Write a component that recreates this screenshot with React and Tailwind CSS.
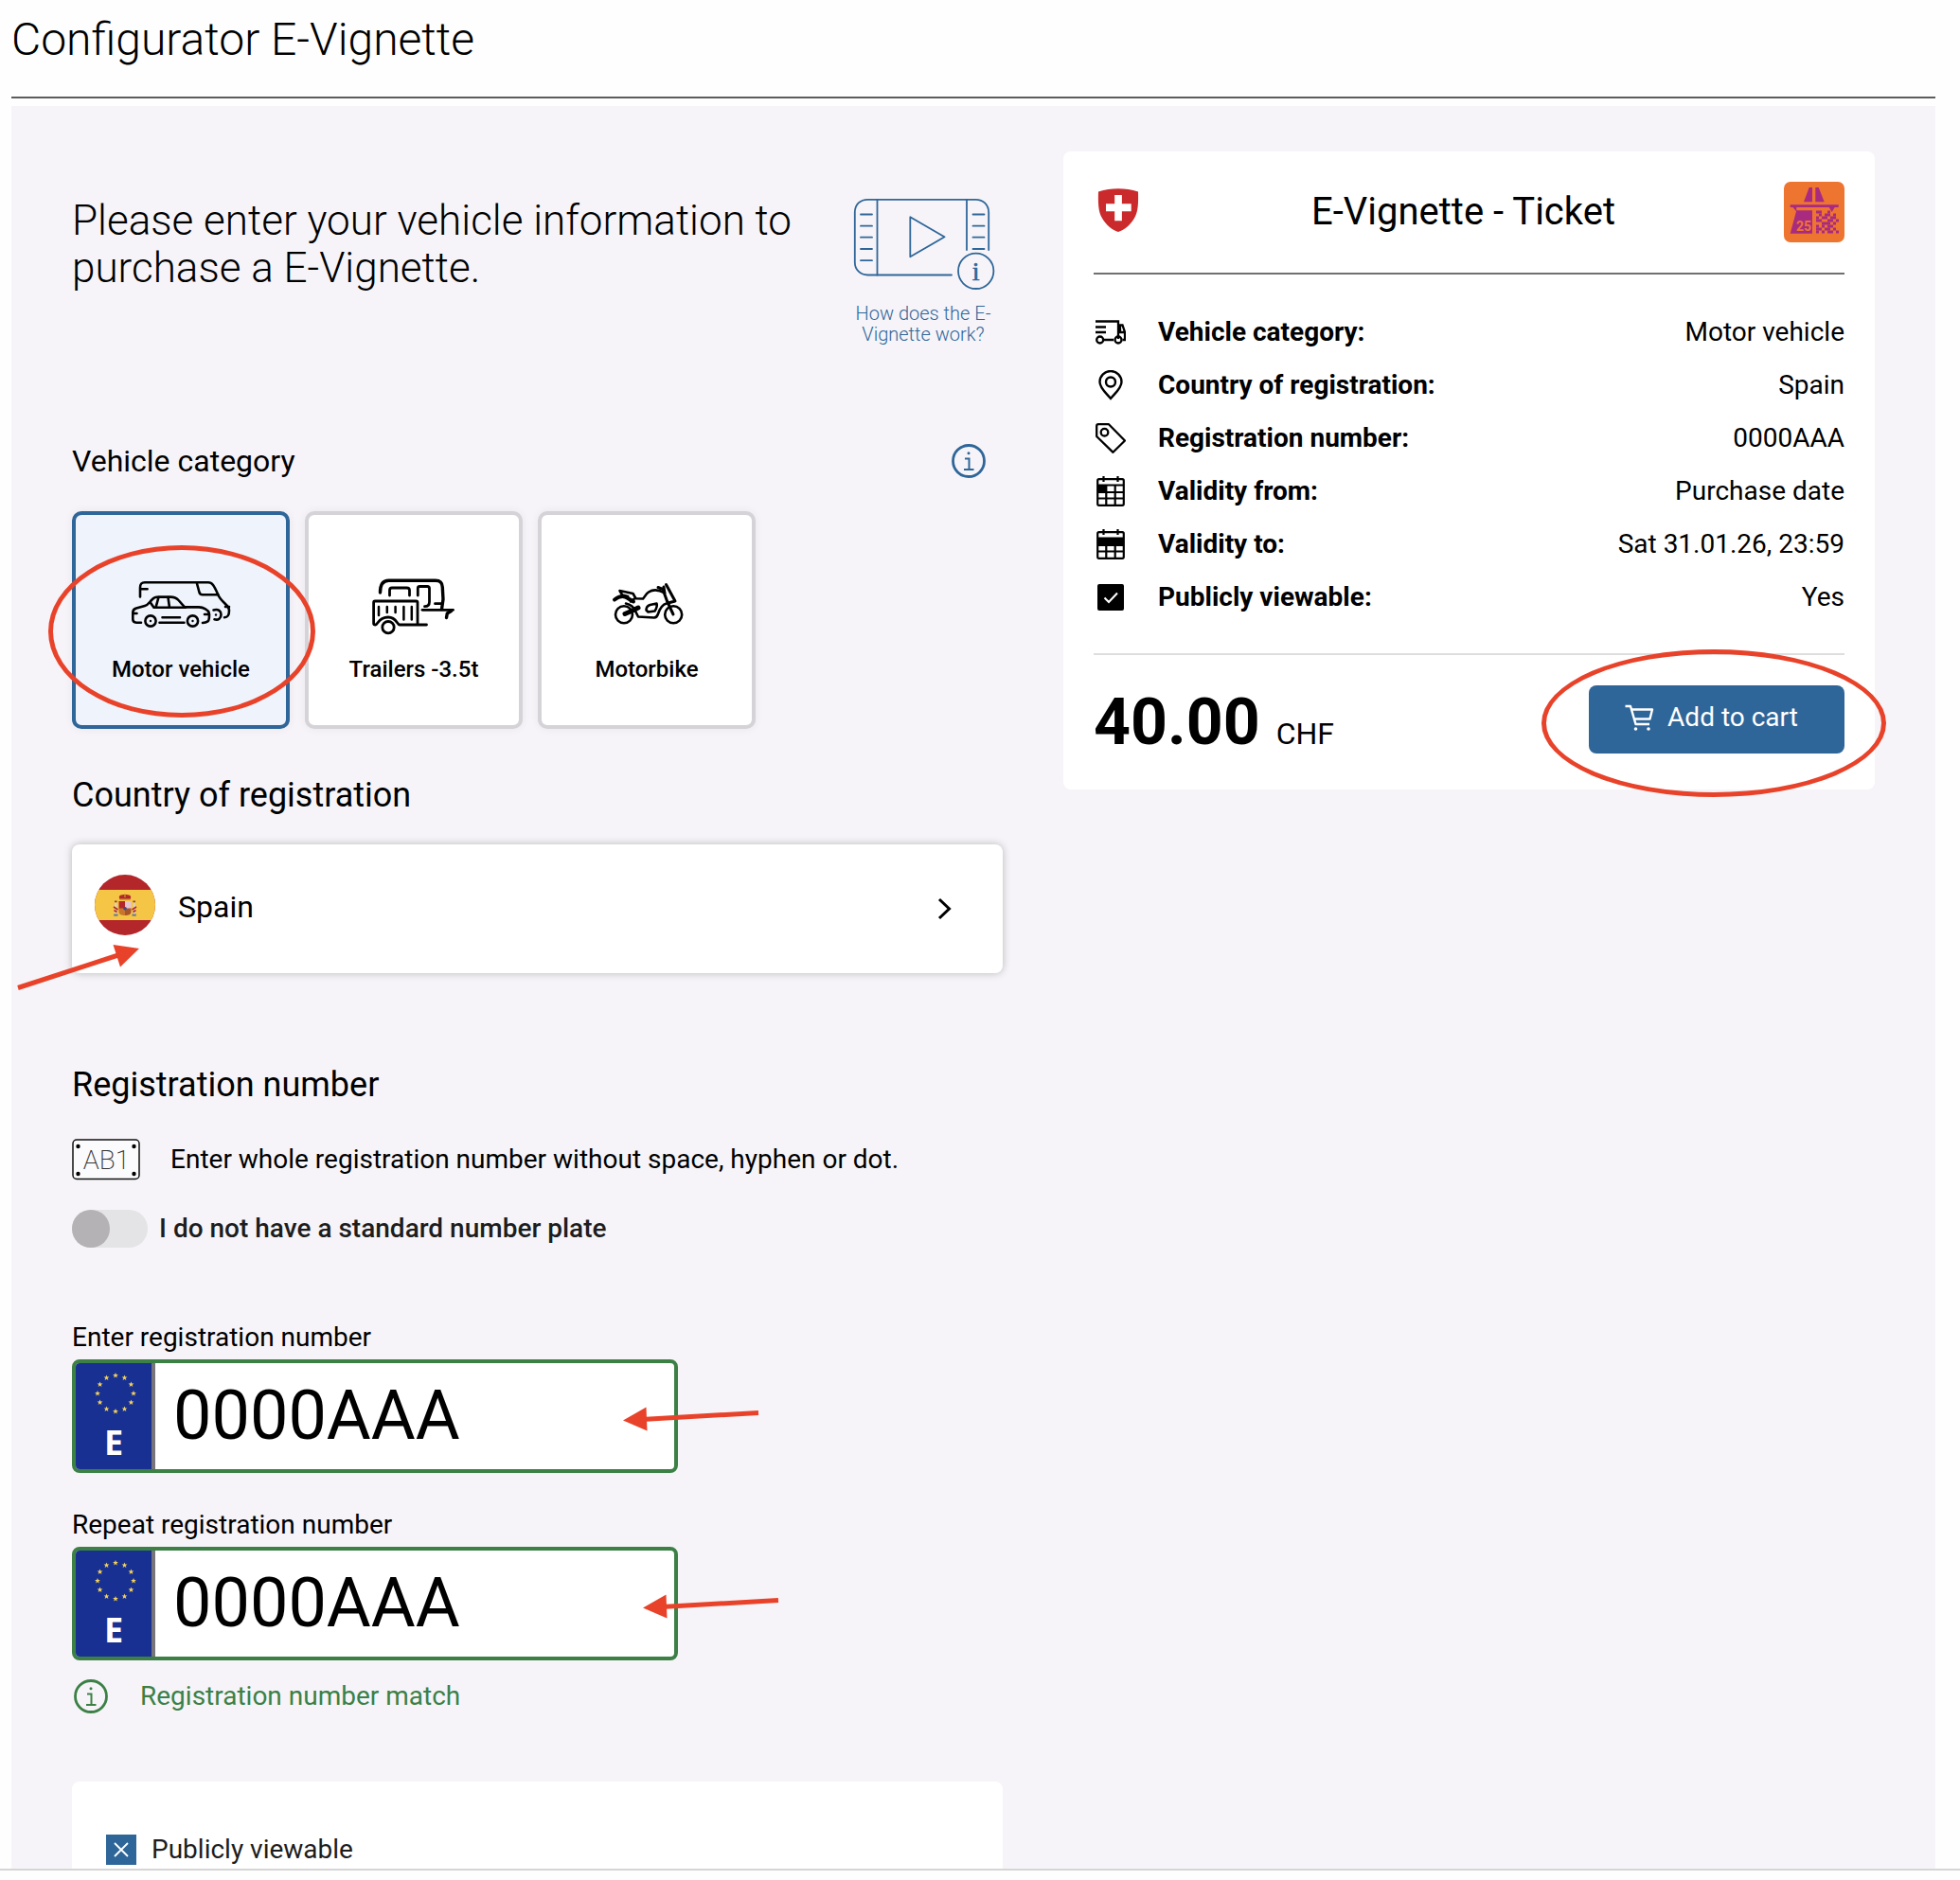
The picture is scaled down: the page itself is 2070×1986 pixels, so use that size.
import React, { useState } from 'react';

const CATEGORIES = [
  { key: 'motor', label: 'Motor vehicle', Icon: CarIcon },
  { key: 'trailer', label: 'Trailers -3.5t', Icon: TrailerIcon },
  { key: 'motorbike', label: 'Motorbike', Icon: MotorbikeIcon },
];

const EU_STARS = Array.from({ length: 12 }, (_, i) => {
  const a = (i * Math.PI) / 6;
  return [22 + 19 * Math.sin(a), 22 - 19 * Math.cos(a)];
});

const DATA_PATTERN = ['11001000', '01011010', '10110110', '11001101', '00111010', '10101100', '11011010', '10101101'];

function CarIcon() {
  return (
    <svg width="108" height="64" viewBox="1 -2 108 64" fill="none" stroke="#000" strokeWidth="2.6" strokeLinecap="round" strokeLinejoin="round">
      <path d="M12 20.5V11c0-4 1-5.7 5-5.7h67c4 0 6 3 10.3 13 1 3 4 6 7.7 9.7 3 3 4 4 4 7 0 6-2 7-5 7.2" />
      <path d="M13 12.3h6.6M72 6.5l2.3 8.5c.5 2.4 1.2 3.3 3.5 3.3h16.5M102 31h4" />
      <path d="M13 47.7H8c-2.6 0-3.7-1-3.7-3.4V37c0-2.5 1-3.6 3.7-4.4l9-2.6c3.5-1 5-4 7-6 3-3 4-3.4 8-3.4h12c4 0 6 .4 8.5 3.4l6.5 7.4H74c5 0 10 3 10.7 6 .6 3 .3 8-1.2 9-1.5 1-3 1.5-5.5 1.6" />
      <path d="M23 26.7l3.5 5H60M31.5 21l-3 10.700M41.5 21l1.5 10.700M4.5 38h4M80 39h5M35.5 42.3H54M32.5 47.7h26" />
      <circle cx="23" cy="46" r="5.6" />
      <circle cx="67.5" cy="46" r="5.6" />
      <path d="M89.5 34.5c5-1.5 8 1 8 4.8s-3 6.3-7 5" />
      <g fill="#000" stroke="none">
        <circle cx="23" cy="46" r="1.2" />
        <circle cx="67.5" cy="46" r="1.2" />
        <circle cx="92" cy="39.5" r="1.2" />
      </g>
    </svg>
  );
}

function TrailerIcon() {
  return (
    <svg width="96" height="64" viewBox="0 -2 96 64" fill="none" stroke="#000" strokeWidth="2.8" strokeLinecap="round" strokeLinejoin="round">
      <path strokeWidth="3.4" d="M12.5 16c0-8 3-12.7 9-12.7H71c5 0 7 2 7.3 7L79 23l-1.5 10.5" />
      <path d="M57 34.3h32.5" />
      <path strokeWidth="3.4" d="M87.5 35.5l-4.2 2.5-.8 4.5" />
      <path d="M22.5 19v-5.5c0-1.8.7-2.5 2.5-2.5h15.5c1.8 0 3 .7 3 2.5V19M52.3 19v-7.5c0-1.5.7-2 2-2h8c1.5 0 2.2.7 2.2 2.2v14c0 3-1 5-5 5M70.5 27.7H78" />
      <path d="M52 50V26.5c0-1-.5-1.5-1.5-1.5H7.100c-1 0-1.5.5-1.5 1.5v22c0 1 .5 1.5 2 1.5 2.4 0 3-8 13.4-8 9 0 9 8 12 8h28.5" />
      <path strokeWidth="2.5" d="M11 31v9M19.8 31v6M28.6 31v6M37.4 31v13.5M45.8 31v13.5" />
      <circle cx="21" cy="52.7" r="6.2" />
    </svg>
  );
}

function MotorbikeIcon() {
  return (
    <svg width="84" height="64" viewBox="0 -2 84 64" fill="none" stroke="#000" strokeWidth="2.6" strokeLinecap="round" strokeLinejoin="round">
      <circle cx="18" cy="39.3" r="9" />
      <circle cx="70.2" cy="39.3" r="9" />
      <path strokeWidth="5" d="M19 38.5l8-3.5 6-3" />
      <path strokeWidth="4" d="M8 23.5c5-4 10-4.5 14-1.5l6 3.5" />
      <path d="M20 27.5c5 1 8 3 10 8l3 6 17 1c2 0 3-1 4-4 2-6 5-10 9-11" />
      <path d="M13.5 14l2.7 4.5 6 1.5M13.5 14l14 3 3 5.2 7.5.3c2-2 3-5 6-7 5-3.3 11-2.5 17 1M29 22.5l-4 3" />
      <path strokeWidth="3" d="M62.5 7.5l9.5 17.5-7.5 2" />
      <path strokeWidth="3" d="M54 10.5l5 2 4.5 12.5 6.5 14M60 10l1 7" />
      <path d="M41.5 34.5c0-3 1-4.5 4-5.5l7-1.5c1 3 0 5-2 8l-7 1z" />
    </svg>
  );
}

function InfoIcon() {
  return (
    <svg className="shrink-0" width="36" height="36" viewBox="0 0 36 36" fill="none" stroke="currentColor" strokeWidth="2.8">
      <circle cx="18" cy="18" r="16.5" />
      <path strokeWidth="2" d="M14 15.5h4.500V27M13 27h10.500" />
      <circle cx="18" cy="9.7" r="1.500" fill="currentColor" stroke="none" />
    </svg>
  );
}

function VideoIcon() {
  return (
    <svg width="152" height="100" viewBox="0 0 152 100" fill="none" stroke="currentColor" strokeWidth="1.8" strokeLinecap="round" strokeLinejoin="round">
      <path d="M106 82.5H17.5c-8 0-13.7-5.6-13.7-13.5V16.5C3.8 8 9.5 2.8 17.5 2.8h114c8 0 13.7 5.6 13.7 13.700V56" />
      <path d="M27.5 2.8v79.700M122 2.8V56" />
      <path d="M10 18.5h12M10 30.7h12M10 42.7h12M10 55h12M10 67.2h12M128.5 18.5h12M128.5 30.7h12M128.5 42.7h12M128.5 55h12" />
      <path d="M62.3 21.3v42l36.2-21z" />
      <circle cx="131.7" cy="78.3" r="18.7" />
      <text x="131.7" y="87.5" textAnchor="middle" fontFamily="Liberation Serif, serif" fontSize="28" fill="currentColor" strokeWidth="0.6">i</text>
    </svg>
  );
}

function SwissShield() {
  return (
    <svg width="52" height="64" viewBox="0 0 52 64">
      <path fill="#cb2a2c" d="M5 10.500C12 7.800 19 7.200 26 7.200s14 .6 21 3.300c.3 11 .3 21-4 28-4 7-10 12-17 14.500C19 50.500 13 45.500 9 38.500c-4.300-7-4.300-17-4-28z" />
      <path fill="#fff" d="M22.200 14h7.700v9.300h9.800v8h-9.800v10h-7.700v-10H13v-8h9.200z" />
    </svg>
  );
}

function VignetteBadge() {
  return (
    <svg width="64" height="64" viewBox="0 0 64 64">
      <rect width="64" height="64" rx="7" fill="#ee7530" />
      <g fill="#a92b80">
        <path d="M21 21.300L26.700 6H30v15.300zM33.300 6h3.400l6 15.300h-9.400zM6.700 24.300h51V27h-4l-3 5-3-5H13.300v4.500L9.500 27H6.700zM13.300 30.300H30v24.400H6.700z" />
        {DATA_PATTERN.map((row, y) =>
          [...row].map((cell, x) => cell === '1' && <rect key={`${x}-${y}`} x={34 + x * 3} y={30.5 + y * 3} width="3" height="3" />)
        )}
      </g>
      <text x="21" y="51.5" textAnchor="middle" fontFamily="Roboto, sans-serif" fontWeight="700" fontSize="14" fill="#ee7530">25</text>
    </svg>
  );
}

function SpainFlag() {
  return (
    <svg className="shrink-0 rounded-full" width="64" height="64" viewBox="0 0 64 64">
      <rect width="64" height="64" fill="#b3272b" />
      <rect y="16" width="64" height="32" fill="#f5c545" />
      <path fill="#b3272b" d="M26 24.5c-1-2.5 2-3.5 6-3.5s7 1 6 3.5l-1 2.5H27z" />
      <path fill="#c9a030" d="M31.4 20h1.2v4h-1.2zM27 25.5h10v1.5H27z" />
      <path fill="#b3272b" d="M25.5 28H32v8h-6.5z" />
      <path fill="#e5c3cf" d="M32 28h6.5v8H32z" />
      <path fill="#c7762c" d="M25.5 35.5H32V43c-4 0-6.5-1-6.5-4z" />
      <path fill="#a8552b" d="M32 35.5h6.5V39c0 3-2.5 4-6.5 4z" />
      <circle cx="32" cy="35.8" r="1.8" fill="#3b4a8c" />
      <path fill="#d8d3cf" d="M21.3 29.5h2V42h-2zM40.7 29.5h2V42h-2z" />
      <path fill="#6f7f86" d="M20.2 41.5h4.3v2.2h-4.3zM39.5 41.5h4.3v2.2h-4.3z" />
      <path fill="none" stroke="#b3272b" strokeWidth="1.6" d="M20 34l4.5 3M44 34l-4.5 3M20.5 37.5l3 2M43.5 37.5l-3 2" />
      <path fill="#8a4a2c" d="M21 27.5h2.6v1.7H21zM40.4 27.5H43v1.7h-2.6z" />
    </svg>
  );
}

function PlateIcon() {
  return (
    <svg className="shrink-0" width="72" height="44" viewBox="0 0 72 44">
      <rect x="1" y="1" width="70" height="41.5" rx="4" fill="#fbfafc" stroke="#111" strokeWidth="1.5" />
      <g fill="#000">
        <circle cx="6.5" cy="8" r="2.2" />
        <circle cx="65.5" cy="8" r="2.2" />
        <circle cx="6.5" cy="37" r="2.2" />
        <circle cx="65.5" cy="37" r="2.2" />
      </g>
      <text x="36.5" y="32" textAnchor="middle" fontFamily="Roboto, sans-serif" fontWeight="200" fontSize="28" fill="#333">AB1</text>
    </svg>
  );
}

function TruckIcon() {
  return (
    <svg width="32" height="32" viewBox="0 0 32 32" fill="none" stroke="#000" strokeWidth="2.3">
      <path d="M0 4.5h24V23M0 10.5h11M0 16h11M9 24h10M24 8.5h4.5L31 16v8h-2.5M26 9.500V16h5" />
      <circle cx="4.7" cy="24" r="3.5" />
      <circle cx="24" cy="24" r="3.5" />
    </svg>
  );
}

function PinIcon() {
  return (
    <svg width="32" height="32" viewBox="0 0 32 32" fill="none" stroke="#000" strokeWidth="2.4">
      <path d="M16 30C11 24 4.5 19 4.5 12.500a11.500 11.500 0 0 1 23 0C27.5 19 21 24 16 30z" />
      <circle cx="16" cy="12.5" r="5" />
    </svg>
  );
}

function TagIcon() {
  return (
    <svg width="32" height="32" viewBox="0 0 32 32" fill="none" stroke="#000" strokeWidth="2.3" strokeLinejoin="round">
      <path d="M1.2 3c0-1.2.6-1.8 1.8-1.8h11L31 18.500 18.500 30.800 1.200 14z" />
      <circle cx="9.5" cy="9.7" r="3.8" />
    </svg>
  );
}

function CalendarIcon({ fullWeek }) {
  return (
    <svg width="32" height="32" viewBox="0 0 32 32" fill="none" stroke="#000" strokeWidth="2.2">
      <rect x="2.2" y="3.2" width="27.6" height="27.6" rx="1.5" />
      <path d="M8.5 0v6M23.5 0v6M2 9.500h28M2 17h28M2 23.500h28M11.300 9.500V31M20.700 9.500V31" />
      <path fill="#000" stroke="none" d={fullWeek ? 'M2 9h28v8H2z' : 'M2 9h9.500v8H2z'} />
    </svg>
  );
}

function CheckedIcon() {
  return (
    <svg width="32" height="32" viewBox="0 0 32 32">
      <rect x="2" y="2" width="28" height="28" rx="2" fill="#000" />
      <path d="M9.500 16.500l4.500 4.500 9-9.500" fill="none" stroke="#fff" strokeWidth="2" />
    </svg>
  );
}

function CartIcon() {
  return (
    <svg width="32" height="32" viewBox="0 0 32 32" fill="none" stroke="#fff" strokeWidth="2.4" strokeLinejoin="round">
      <path d="M1.500 4H7l5.500 19H27M8.200 7.500H30L27.500 17.500H11" />
      <circle cx="12.5" cy="28" r="1.8" fill="#fff" stroke="none" />
      <circle cx="26" cy="28" r="1.8" fill="#fff" stroke="none" />
    </svg>
  );
}

// hand-drawn marker pointing to the left
function LeftArrow({ className }) {
  return (
    <svg className={className} width="144" height="28" viewBox="0 0 144 28">
      <path d="M20 14.500L143 7.500" stroke="#e8432a" strokeWidth="5" />
      <path d="M0 15.500L24.500 1.500l1 25z" fill="#e8432a" />
    </svg>
  );
}

function PlateInput({ id, label, arrowClass }) {
  const [value, setValue] = useState('0000AAA');
  return (
    <div>
      <label htmlFor={id} className="block text-[28px] leading-[38px]">{label}</label>
      <div className="relative mt-1 flex h-[120px] w-full max-w-[640px] rounded-lg border-4 border-[#3c8046] bg-white">
        <div className="flex w-21 shrink-0 flex-col items-center rounded-l-sm border-r-4 border-[#78747c] bg-[#183092] pt-2.5">
          <svg className="ml-1" width="44" height="44" viewBox="0 0 44 44" fill="#f3d25c">
            {EU_STARS.map(([x, y]) => (
              <path key={`${x}-${y}`} transform={`translate(${x} ${y})`} d="M0-3l.8 2h2.100L1.200.4l.7 2.200L0 1.300l-1.900 1.300.7-2.200L-2.900-1h2.100z" />
            ))}
          </svg>
          <span className="mt-3 font-['Open_Sans',sans-serif] text-4xl leading-9 font-bold text-white">E</span>
        </div>
        <input
          id={id}
          value={value}
          onChange={(e) => setValue(e.target.value)}
          className="w-full min-w-0 rounded-r-sm bg-transparent px-[19px] text-[72px] outline-none"
        />
        <LeftArrow className={arrowClass} />
      </div>
    </div>
  );
}

function TicketRow({ icon, label, value }) {
  return (
    <div className="flex items-center text-[28px] leading-[56px]">
      <dt className="flex items-center gap-[34px] pl-0.5 font-bold">
        {icon}
        {label}
      </dt>
      <dd className="ml-auto">{value}</dd>
    </div>
  );
}

function Ticket() {
  return (
    <aside className="mt-12 self-start rounded-lg bg-white p-8">
      <div className="flex items-center justify-between border-b-2 border-[#707070] pb-8">
        <SwissShield />
        <h2 className="text-[40px] leading-[48px]">E-Vignette - Ticket</h2>
        <VignetteBadge />
      </div>
      <dl className="border-b-2 border-[#dedede] pt-[33px] pb-[31px]">
        <TicketRow icon={<TruckIcon />} label="Vehicle category:" value="Motor vehicle" />
        <TicketRow icon={<PinIcon />} label="Country of registration:" value="Spain" />
        <TicketRow icon={<TagIcon />} label="Registration number:" value="0000AAA" />
        <TicketRow icon={<CalendarIcon />} label="Validity from:" value="Purchase date" />
        <TicketRow icon={<CalendarIcon fullWeek />} label="Validity to:" value="Sat 31.01.26, 23:59" />
        <TicketRow icon={<CheckedIcon />} label="Publicly viewable:" value="Yes" />
      </dl>
      <div className="flex items-start justify-between pt-8">
        <p className="text-[68px] leading-[78px] font-bold">
          40.00 <span className="text-[32px] leading-none font-normal">CHF</span>
        </p>
        <div className="relative">
          <button className="flex h-[72px] w-[270px] items-center justify-center gap-3.5 rounded-lg bg-[#2f6699] pr-3 pb-1 text-[28px] text-white">
            <CartIcon />
            Add to cart
          </button>
          <div className="pointer-events-none absolute -top-[38px] -left-[50px] h-[156px] w-[364px] rounded-[50%] border-5 border-[#e8432a]" />
        </div>
      </div>
    </aside>
  );
}

export default function App() {
  const [category, setCategory] = useState('motor');

  return (
    <div className="bg-[#fefefe] pb-2.5 font-[Roboto,sans-serif] text-black">
      <div className="border-b-2 border-[#d5d4d6] pr-[26px] pl-3">
        <h1 className="border-b-2 border-[#5c5c5c] pt-3 pb-[30px] text-[48px] leading-[60px] font-light">Configurator E-Vignette</h1>

        <main className="mt-2 grid grid-cols-[983fr_857fr] gap-16 bg-[#f6f4f8] px-16">
          <div className="pt-24">
            <div className="flex items-start justify-between pr-2">
              <h2 className="text-[44px] leading-[50px] font-light">Please enter your vehicle information to purchase a E-Vignette.</h2>
              <a href="#how" className="w-[152px] shrink-0 text-center text-xl leading-[22px] font-light text-[#2f6699]">
                <VideoIcon />
                <span className="mt-3 block">How does the E-Vignette work?</span>
              </a>
            </div>

            <div className="mt-[103px] flex items-center justify-between pr-[18px]">
              <h3 className="text-[32px] leading-10">Vehicle category</h3>
              <button aria-label="Vehicle category information" className="text-[#2f6699]"><InfoIcon /></button>
            </div>
            <div className="relative mt-[33px] flex gap-4">
              {CATEGORIES.map(({ key, label, Icon }) => (
                <button
                  key={key}
                  onClick={() => setCategory(key)}
                  className={`flex h-[230px] w-[230px] flex-col items-center rounded-[10px] border-4 pt-16 shadow-[0_0_10px_rgba(0,0,0,0.06)] ${
                    category === key ? 'border-[#2f6699] bg-[#eff3fb]' : 'border-[#d5d3d7] bg-white'
                  }`}
                >
                  <Icon />
                  <span className="mt-5 text-2xl leading-[30px] font-medium">{label}</span>
                </button>
              ))}
              <div className="pointer-events-none absolute top-9 -left-[25px] h-[182px] w-[282px] rounded-[50%] border-5 border-[#e8432a]" />
            </div>

            <h3 className="mt-12 text-4xl leading-[44px]">Country of registration</h3>
            <div className="relative mt-[30px]">
              <button className="flex h-[136px] w-full items-center rounded-lg bg-white pr-[52px] pb-1 pl-6 text-[32px] shadow-[0_0_8px_rgba(0,0,0,0.25)]">
                <span className="mb-1"><SpainFlag /></span>
                <span className="ml-6">Spain</span>
                <svg className="mt-1 ml-auto" width="20" height="28" viewBox="0 0 20 28" fill="none" stroke="#000" strokeWidth="3">
                  <path d="M5 4l10.500 10L5 24" />
                </svg>
              </button>
              <svg className="pointer-events-none absolute top-[102px] -left-[60px]" width="136" height="54" viewBox="0 0 136 54">
                <path d="M3 49.500L112 14" stroke="#e8432a" strokeWidth="5" />
                <path d="M131 8L103.500 4l7.500 23.500z" fill="#e8432a" />
              </svg>
            </div>

            <h3 className="mt-24 text-4xl leading-[44px]">Registration number</h3>
            <div className="mt-[35px] flex items-center gap-8 text-[28px] leading-[44px]">
              <PlateIcon />
              <p>Enter whole registration number without space, hyphen or dot.</p>
            </div>
            <label className="mt-[31px] flex h-10 items-center gap-3 text-[28px] font-medium text-[#1d1d20]">
              <input
                type="checkbox"
                role="switch"
                className="h-10 w-20 shrink-0 appearance-none rounded-full bg-[#e4e3e6] before:block before:size-10 before:rounded-full before:bg-[#b4b2b5] checked:before:ml-10"
              />
              I do not have a standard number plate
            </label>

            <div className="mt-19 space-y-9">
              <PlateInput id="plate" label="Enter registration number" arrowClass="pointer-events-none absolute top-[45px] left-[578px]" />
              <PlateInput id="plate-repeat" label="Repeat registration number" arrowClass="pointer-events-none absolute top-[45px] left-[599px]" />
            </div>
            <p className="mt-5 flex items-center gap-[34px] pl-0.5 text-[28px] leading-9 text-[#3c8046]">
              <InfoIcon />
              Registration number match
            </p>

            <div className="mt-18 rounded-t-lg bg-white px-9 pt-14 pb-1">
              <label className="flex items-center gap-4 text-[28px] leading-8 text-[#1d1d20]">
                <span className="grid">
                  <input type="checkbox" defaultChecked className="peer col-start-1 row-start-1 size-8 appearance-none border border-[#2f6699] checked:bg-[#2f6699]" />
                  <svg className="pointer-events-none invisible col-start-1 row-start-1 peer-checked:visible" width="32" height="32" viewBox="0 0 32 32" fill="none" stroke="#fff" strokeWidth="1.8">
                    <path d="M9 9l14 14M23 9L9 23" />
                  </svg>
                </span>
                Publicly viewable
              </label>
            </div>
          </div>

          <Ticket />
        </main>
      </div>
    </div>
  );
}
